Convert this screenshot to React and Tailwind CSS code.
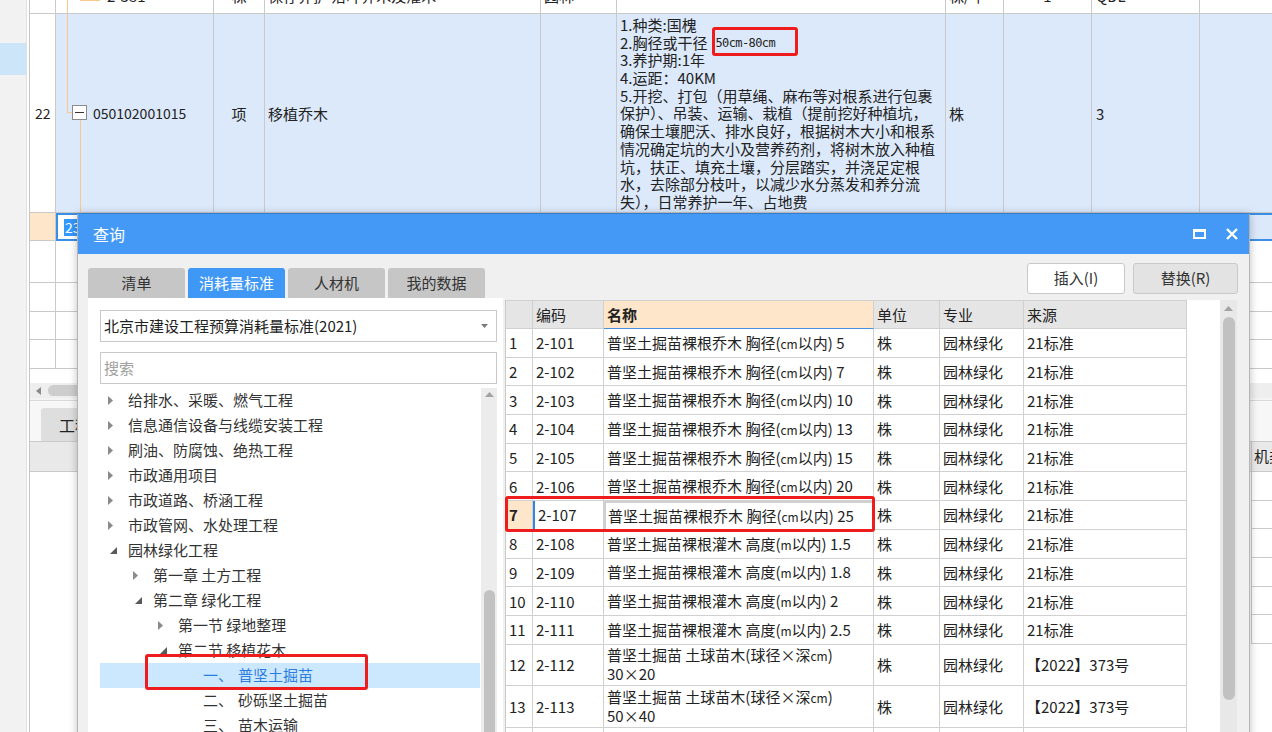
import React from "react";

const C = "border-r border-[#c9c9c9] shrink-0";
const ORANGE = "bg-[#f9c88e]";

function TreeArrow({ exp }) {
  if (exp)
    return (
      <svg width="7" height="7" viewBox="0 0 7 7" className="ml-[2px]">
        <polygon points="7,0 7,7 0,7" fill="#595959" />
      </svg>
    );
  return (
    <svg width="5" height="9" viewBox="0 0 5 9">
      <polygon points="0,0 5,4.5 0,9" fill="#8a8a8a" />
    </svg>
  );
}

function TopGrid() {
  const descLines = [
    "1.种类:国槐",
    null,
    "3.养护期:1年",
    "4.运距：40KM",
    "5.开挖、打包（用草绳、麻布等对根系进行包裹",
    "保护）、吊装、运输、栽植（提前挖好种植坑，",
    "确保土壤肥沃、排水良好，根据树木大小和根系",
    "情况确定坑的大小及营养药剂，将树木放入种植",
    "坑，扶正、填充土壤，分层踏实，并浇足定根",
    "水，去除部分枝叶，以减少水分蒸发和养分流",
    "失），日常养护一年、占地费",
  ];
  const emptyRows = ["h-[42px]", "h-[29px]", "h-[28px]", "h-[29px]"];
  return (
    <div className="flex flex-col text-[15px] text-[#222] leading-[17px]">
      {/* row 21 (partially visible) */}
      <div className="flex h-[30px] -mt-[16px] border-b border-[#c9c9c9] bg-white">
        <div className={`w-[26px] ${C}`} />
        <div className={`w-[158px] ${C} relative pt-[3px] pl-[51px]`}>
          <div className={`absolute left-[11px] top-0 bottom-0 w-px ${ORANGE}`} />
          <div className={`absolute left-[24px] top-[16px] w-[20px] h-px ${ORANGE}`} />
          2-381
        </div>
        <div className={`w-[51px] ${C} text-center pt-[3px]`}>株</div>
        <div className={`w-[276px] ${C} pl-[3px] pt-[3px]`}>保存养护 落叶乔木及灌木</div>
        <div className={`w-[76px] ${C} pl-[3px] pt-[3px]`}>园林</div>
        <div className={`w-[329px] ${C}`} />
        <div className={`w-[58px] ${C} pl-[3px] pt-[3px]`}>株/年</div>
        <div className={`w-[88px] ${C} text-center pt-[3px]`}>1</div>
        <div className={`w-[108px] ${C} pl-[4px] pt-[3px]`}>QDL</div>
        <div className="flex-1" />
      </div>

      {/* row 22 */}
      <div className="flex h-[199px] border-b border-[#c9c9c9] bg-[#dce9fb]">
        <div className={`w-[26px] ${C} bg-white flex items-center pl-[5px] text-[14px]`}>22</div>
        <div className={`w-[158px] ${C} relative flex items-center pl-[37px] text-[14px]`}>
          <div className={`absolute left-[11px] top-0 h-[99px] w-px ${ORANGE}`} />
          <div className={`absolute left-[11px] top-[98px] w-[5px] h-px ${ORANGE}`} />
          <div className={`absolute left-[24px] top-[106px] bottom-0 w-px ${ORANGE}`} />
          <div className="absolute left-[16px] top-[91px] w-[15px] h-[15px] border border-[#8c8c8c] bg-white flex items-center justify-center">
            <div className="w-[9px] h-px bg-[#333]" />
          </div>
          050102001015
        </div>
        <div className={`w-[51px] ${C} flex items-center justify-center`}>项</div>
        <div className={`w-[276px] ${C} flex items-center pl-[3px]`}>移植乔木</div>
        <div className={`w-[76px] ${C}`} />
        <div className={`w-[329px] ${C} relative pt-[2px] pl-[3px] whitespace-nowrap flex flex-col`}>
          {descLines.map((l, i) =>
            l === null ? (
              <div key={i} className="h-[17.7px] leading-[17.7px] flex items-center">
                <span>2.胸径或干径</span>
                <span className="ml-[8px] text-[12px] leading-[14px] font-['DejaVu_Sans_Mono',monospace] tracking-[-0.6px]">50cm-80cm</span>
              </div>
            ) : (
              <div key={i} className="h-[17.7px] leading-[17.7px]">
                {l}
              </div>
            )
          )}
          <div className="absolute left-[95px] top-[13px] w-[86px] h-[29px] border-[3px] border-[#ee1c1c] rounded-[3px]" />
        </div>
        <div className={`w-[58px] ${C} flex items-center pl-[3px]`}>株</div>
        <div className={`w-[88px] ${C}`} />
        <div className={`w-[108px] ${C} flex items-center pl-[4px]`}>3</div>
        <div className="flex-1" />
      </div>

      {/* row 23 (selected) */}
      <div className="flex h-[28px]">
        <div className={`w-[26px] ${C} border-b bg-[#fde6c9]`} />
        <div className="flex-1 flex border-2 border-r-0 border-[#3a8ee6] bg-[#dce9fb]">
          <div className={`w-[157px] ${C} bg-white flex items-center pl-[6px] text-[14px]`}>
            <span className="bg-[#3399ff] text-white px-[1px]">23</span>
          </div>
          <div className={`w-[51px] ${C}`} />
          <div className={`w-[276px] ${C}`} />
          <div className={`w-[76px] ${C}`} />
          <div className={`w-[329px] ${C}`} />
          <div className={`w-[58px] ${C}`} />
          <div className={`w-[88px] ${C}`} />
          <div className={`w-[108px] ${C}`} />
          <div className="flex-1" />
        </div>
      </div>

      {emptyRows.map((h, i) => (
        <div key={i} className={`flex ${h} border-b border-[#c9c9c9] bg-white`}>
          <div className={`w-[26px] ${C}`} />
          <div className={`w-[158px] ${C}`} />
          <div className={`w-[51px] ${C}`} />
          <div className={`w-[276px] ${C}`} />
          <div className={`w-[76px] ${C}`} />
          <div className={`w-[329px] ${C}`} />
          <div className={`w-[58px] ${C}`} />
          <div className={`w-[88px] ${C}`} />
          <div className={`w-[108px] ${C}`} />
          <div className="flex-1" />
        </div>
      ))}
    </div>
  );
}

function BottomPanel() {
  return (
    <div className="flex flex-col flex-1 text-[15px] text-[#222]">
      <div className="h-[14px]" />
      <div className="h-[15px] bg-[#eeeeee] flex items-center pl-[6px]">
        <svg width="5" height="8" viewBox="0 0 5 8">
          <polygon points="5,0 0,4 5,8" fill="#8a8a8a" />
        </svg>
        <div className="ml-[7px] w-[240px] h-[11px] rounded-full bg-[#cdcdcd]" />
      </div>
      <div className="h-[3px] bg-[#f4f4f4] border-b border-[#d9d9d9]" />
      <div className="h-[40px] bg-[#f7f7f7] flex items-end pl-[11px]">
        <div className="h-[33px] w-[120px] bg-[#dedede] rounded-t-[3px] flex items-center pl-[18px] text-[16px]">
          工程量明细
        </div>
      </div>
      <div className="h-[31px] flex bg-[#e9e9e9] border-y border-[#cacaca]">
        <div className="w-[1221px] shrink-0" />
        <div className="flex-1 border-l border-[#cacaca] flex items-center pl-[2px] whitespace-nowrap">机类别</div>
      </div>
      {[0, 1, 2, 3, 4, 5].map((i) => (
        <div key={i} className="h-[28.7px] flex bg-white">
          <div className="w-[1221px] shrink-0" />
          <div className="flex-1 border-l border-b border-[#cacaca]" />
        </div>
      ))}
    </div>
  );
}

const TREE = [
  { l: 0, a: "c", t: "给排水、采暖、燃气工程" },
  { l: 0, a: "c", t: "信息通信设备与线缆安装工程" },
  { l: 0, a: "c", t: "刷油、防腐蚀、绝热工程" },
  { l: 0, a: "c", t: "市政通用项目" },
  { l: 0, a: "c", t: "市政道路、桥涵工程" },
  { l: 0, a: "c", t: "市政管网、水处理工程" },
  { l: 0, a: "e", t: "园林绿化工程" },
  { l: 1, a: "c", t: "第一章 土方工程" },
  { l: 1, a: "e", t: "第二章 绿化工程" },
  { l: 2, a: "c", t: "第一节 绿地整理" },
  { l: 2, a: "e", t: "第二节 移植花木" },
  { l: 3, a: "n", t: "一、", t2: "普坚土掘苗", sel: true },
  { l: 3, a: "n", t: "二、", t2: "砂砾坚土掘苗" },
  { l: 3, a: "n", t: "三、", t2: "苗木运输" },
];

const PAD = ["pl-[8px]", "pl-[33px]", "pl-[58px]", "pl-[83px]"];

function LeftPanel() {
  return (
    <div className="w-[415px] shrink-0 bg-white flex flex-col pl-[12px]">
      <div className="mt-[12px] w-[397px] h-[32px] border border-[#c9c9c9] flex items-center pl-[3px] pr-[8px] text-[15px] text-[#222]">
        北京市建设工程预算消耗量标准(2021)
        <svg width="7" height="4" viewBox="0 0 7 4" className="ml-auto">
          <polygon points="0,0 7,0 3.5,4" fill="#7a7a7a" />
        </svg>
      </div>
      <div className="mt-[10px] w-[397px] h-[32px] border border-[#c9c9c9] flex items-center pl-[3px] text-[15px] text-[#a0a0a0]">
        搜索
      </div>
      <div className="mt-[4px] flex flex-1">
        <div className="relative w-[380px] flex flex-col">
          {TREE.map((n, i) => (
            <div
              key={i}
              className={`h-[25px] shrink-0 flex items-center text-[15px] whitespace-nowrap ${PAD[n.l]} ${
                n.sel ? "bg-[#cce8ff] text-[#2b7de0]" : "text-[#333]"
              }`}
            >
              <div className="w-[20px] flex items-center">
                {n.a === "c" && <TreeArrow exp={false} />}
                {n.a === "e" && <TreeArrow exp />}
              </div>
              <span>{n.t}</span>
              {n.t2 && <span className="ml-[5px]">{n.t2}</span>}
            </div>
          ))}
          <div className="absolute left-[45px] top-[266px] w-[223px] h-[36px] border-[3px] border-[#ee1c1c] rounded-[3px]" />
        </div>
        <div className="ml-[1px] w-[16px] bg-[#ececec] flex flex-col items-center">
          <svg width="9" height="5" viewBox="0 0 9 5" className="mt-[4px]">
            <polygon points="0,5 9,5 4.5,0" fill="#a3a3a3" />
          </svg>
          <div className="mt-[193px] w-[11px] h-[200px] rounded-full bg-[#c2c2c2]" />
        </div>
      </div>
    </div>
  );
}

const ROWS = [
  ["1", "2-101", "乔", "胸径", "5"],
  ["2", "2-102", "乔", "胸径", "7"],
  ["3", "2-103", "乔", "胸径", "10"],
  ["4", "2-104", "乔", "胸径", "13"],
  ["5", "2-105", "乔", "胸径", "15"],
  ["6", "2-106", "乔", "胸径", "20"],
  ["7", "2-107", "乔", "胸径", "25"],
  ["8", "2-108", "灌", "高度", "1.5"],
  ["9", "2-109", "灌", "高度", "1.8"],
  ["10", "2-110", "灌", "高度", "2"],
  ["11", "2-111", "灌", "高度", "2.5"],
];

const TC = "border-r border-b border-[#d0d0d0] shrink-0";

function NameText({ kind, dim, v }) {
  return (
    <span className="whitespace-nowrap">
      {kind === "乔" ? "普坚土掘苗裸根乔木" : "普坚土掘苗裸根灌木"} {dim}(
      <span className="text-[12px]">{kind === "乔" ? "cm" : "m"}</span>以内) {v}
    </span>
  );
}

function ResultTable() {
  return (
    <div className="relative w-[715px] shrink-0 bg-white border-l border-[#c9c9c9] text-[15px] text-[#222] leading-[17px]">
      <div className="flex h-[29px]">
        <div className={`w-[27px] ${TC} bg-[#e5e5e5] border-t`} />
        <div className={`w-[71px] ${TC} bg-[#e5e5e5] border-t flex items-center pl-[3px]`}>编码</div>
        <div className={`w-[270px] ${TC} bg-[#fde6c9] border-t border-b-[#4a90e2] flex items-center pl-[3px] font-bold`}>名称</div>
        <div className={`w-[66px] ${TC} bg-[#e5e5e5] border-t flex items-center pl-[3px]`}>单位</div>
        <div className={`w-[84px] ${TC} bg-[#e5e5e5] border-t flex items-center pl-[3px]`}>专业</div>
        <div className={`w-[163px] ${TC} bg-[#e5e5e5] border-t flex items-center pl-[3px]`}>来源</div>
      </div>
      {ROWS.map((r) => {
        const sel = r[0] === "7";
        return (
          <div key={r[0]} className="flex h-[28.7px]">
            <div className={`w-[27px] ${TC} flex items-center pl-[3px] ${sel ? "bg-[#fde6c9] font-bold" : ""}`}>{r[0]}</div>
            <div className={`w-[71px] ${TC} flex items-center pl-[3px] ${sel ? "border-l-2 border-l-[#2f86e8] pl-[1px]" : ""}`}>{r[1]}</div>
            <div className={`w-[270px] ${TC} flex items-center ${sel ? "border-2 border-[#8a8a8a] pl-[2px]" : "pl-[3px]"}`}>
              <NameText kind={r[2]} dim={r[3]} v={r[4]} />
            </div>
            <div className={`w-[66px] ${TC} flex items-center pl-[3px]`}>株</div>
            <div className={`w-[84px] ${TC} flex items-center pl-[3px]`}>园林绿化</div>
            <div className={`w-[163px] ${TC} flex items-center pl-[3px]`}>21标准</div>
          </div>
        );
      })}
      {[
        ["12", "2-112", "30×20"],
        ["13", "2-113", "50×40"],
        ["14", "2-114", "70×50"],
      ].map((r) => (
        <div key={r[0]} className="flex h-[41.7px]">
          <div className={`w-[27px] ${TC} flex items-center pl-[3px]`}>{r[0]}</div>
          <div className={`w-[71px] ${TC} flex items-center pl-[3px]`}>{r[1]}</div>
          <div className={`w-[270px] ${TC} flex flex-col justify-center pl-[3px] leading-[18px]`}>
            <span className="whitespace-nowrap">
              普坚土掘苗 土球苗木(球径×深<span className="text-[12px]">cm</span>)
            </span>
            <span>{r[2]}</span>
          </div>
          <div className={`w-[66px] ${TC} flex items-center pl-[3px]`}>株</div>
          <div className={`w-[84px] ${TC} flex items-center pl-[3px]`}>园林绿化</div>
          <div className={`w-[163px] ${TC} flex items-center pl-[2px]`}>【2022】373号</div>
        </div>
      ))}
      <div className="absolute -left-px top-[196px] w-[370px] h-[36px] border-[3px] border-[#ee1c1c] rounded-[3px]" />
    </div>
  );
}

function Dialog() {
  const tabs = ["清单", "消耗量标准", "人材机", "我的数据"];
  return (
    <div className="absolute left-[77px] top-[214px] w-[1173px] h-[530px] bg-[#f0f0f0] border border-t-0 border-[#b5b5b5] shadow-[0_0_8px_rgba(0,0,0,0.25)] flex flex-col">
      <div className="h-[40px] shrink-0 bg-[#4499f6] flex items-center pl-[15px] pr-[11px] text-white">
        <span className="text-[16px]">查询</span>
        <div className="ml-auto flex items-center gap-[20px]">
          <div className="w-[13px] h-[10px] border-2 border-t-[3px] border-white" />
          <svg width="12" height="12" viewBox="0 0 12 12">
            <path d="M1 1L11 11M11 1L1 11" stroke="white" strokeWidth="2.4" />
          </svg>
        </div>
      </div>
      <div className="h-[44px] shrink-0 flex justify-between items-start pl-[10px] pr-[11px]">
        <div className="flex gap-[3px] mt-[14px]">
          {tabs.map((t) => (
            <div
              key={t}
              className={`w-[97px] h-[30px] rounded-t-[3px] flex items-center justify-center text-[15px] ${
                t === "消耗量标准" ? "bg-[#3f98f6] text-white" : "bg-[#c6c6c6] text-[#333]"
              }`}
            >
              {t}
            </div>
          ))}
        </div>
        <div className="flex gap-[8px] mt-[9px]">
          <div className="w-[98px] h-[31px] bg-white border border-[#c9c9c9] rounded-[3px] flex items-center justify-center text-[15px] text-[#333]">
            插入(I)
          </div>
          <div className="w-[105px] h-[31px] bg-[#e3e3e3] border border-[#c9c9c9] rounded-[3px] flex items-center justify-center text-[15px] text-[#333]">
            替换(R)
          </div>
        </div>
      </div>
      <div className="flex flex-1 pl-[10px]">
        <LeftPanel />
        <div className="ml-[2px] pt-[2px] flex">
          <ResultTable />
          <div className="w-[17px] bg-[#e8e8e8] flex flex-col items-center">
            <svg width="9" height="5" viewBox="0 0 9 5" className="mt-[6px]">
              <polygon points="0,5 9,5 4.5,0" fill="#a3a3a3" />
            </svg>
            <div className="mt-[6px] w-[12px] h-[383px] rounded-full bg-[#c1c1c1]" />
          </div>
        </div>
      </div>
    </div>
  );
}

export default function App() {
  return (
    <div className="relative w-[1272px] h-[732px] overflow-hidden bg-white font-['Noto_Sans_CJK_SC','Noto_Sans',sans-serif]">
      <div className="flex h-full">
        <div className="w-[26px] shrink-0 bg-[#f2f2f2] flex flex-col">
          <div className="h-[43px]" />
          <div className="h-[32px] bg-[#cde5f8]" />
        </div>
        <div className="w-[3px] shrink-0 bg-white border-l border-[#e2e2e2]" />
        <div className="flex-1 flex flex-col border-l border-[#c6c6c6] min-w-0">
          <TopGrid />
          <BottomPanel />
        </div>
      </div>
      <Dialog />
    </div>
  );
}
